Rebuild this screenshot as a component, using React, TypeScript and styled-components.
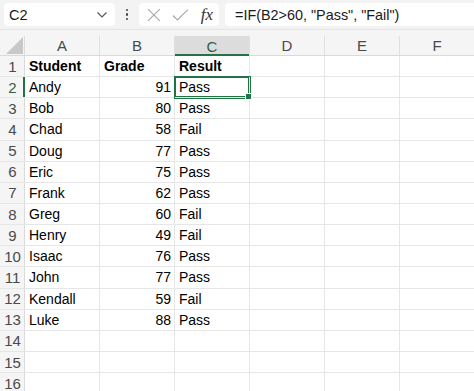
import React from "react";
import styled, { createGlobalStyle } from "styled-components";

const GlobalStyle = createGlobalStyle`
  html, body {
    margin: 0;
    padding: 0;
    background: #ffffff;
    overflow: hidden;
  }
  body {
    font-family: "Liberation Sans", Arial, sans-serif;
  }
`;

const GREEN = "#217346";
const COLS = ["A", "B", "C", "D", "E", "F"];
const SELECTED_COL = 2;
const SELECTED_ROW = 2;

type Row = [string, string, string];

const rows: Row[] = [
  ["Student", "Grade", "Result"],
  ["Andy", "91", "Pass"],
  ["Bob", "80", "Pass"],
  ["Chad", "58", "Fail"],
  ["Doug", "77", "Pass"],
  ["Eric", "75", "Pass"],
  ["Frank", "62", "Pass"],
  ["Greg", "60", "Fail"],
  ["Henry", "49", "Fail"],
  ["Isaac", "76", "Pass"],
  ["John", "77", "Pass"],
  ["Kendall", "59", "Fail"],
  ["Luke", "88", "Pass"],
  ["", "", ""],
  ["", "", ""],
  ["", "", ""],
];

export default function App() {
  return (
    <>
      <GlobalStyle />
      <Window>
        <FormulaBar>
          <NameBox>
            <NameText>C2</NameText>
            <svg width="12" height="8" viewBox="0 0 12 8">
              <path d="M1.5 1.5 L6 6 L10.5 1.5" fill="none" stroke="#555" strokeWidth="1.2" />
            </svg>
          </NameBox>
          <Dots>
            <Dot />
            <Dot />
            <Dot />
          </Dots>
          <ActionBox>
            <svg width="16" height="16" viewBox="0 0 16 16">
              <path d="M2 2 L14 14 M14 2 L2 14" stroke="#a8a8a8" strokeWidth="1.1" />
            </svg>
            <svg width="17" height="14" viewBox="0 0 17 14">
              <path d="M1 7.5 L5.5 12 L16 1.5" fill="none" stroke="#a8a8a8" strokeWidth="1.1" />
            </svg>
            <Fx>fx</Fx>
          </ActionBox>
          <FormulaBox>=IF(B2&gt;60, "Pass", "Fail")</FormulaBox>
        </FormulaBar>
        <Sheet>
          <HeaderRow>
            <Corner>
              <svg width="17" height="17" viewBox="0 0 17 17">
                <path d="M17 0 L17 17 L0 17 Z" fill="#c8c8c8" />
              </svg>
            </Corner>
            {COLS.map((c, i) => (
              <ColHeader key={c} $active={i === SELECTED_COL}>
                {c}
              </ColHeader>
            ))}
          </HeaderRow>
          {rows.map((r, idx) => {
            const n = idx + 1;
            const bold = n === 1;
            return (
              <GridRow key={n}>
                <RowHeader $active={n === SELECTED_ROW}>{n}</RowHeader>
                <Cell $bold={bold}>{r[0]}</Cell>
                <Cell $bold={bold} $right={!bold}>
                  {r[1]}
                </Cell>
                <Cell $bold={bold} $selected={n === SELECTED_ROW}>
                  {r[2]}
                  {n === SELECTED_ROW && <FillHandle />}
                </Cell>
                <Cell />
                <Cell />
                <Cell />
              </GridRow>
            );
          })}
        </Sheet>
      </Window>
    </>
  );
}

const Window = styled.div`
  width: 474px;
  height: 391px;
  overflow: hidden;
  background: #ffffff;
`;

const FormulaBar = styled.div`
  display: flex;
  align-items: center;
  gap: 6px;
  height: 30px;
  padding: 0 0 0 4px;
  background: #f3f3f3;
  border-bottom: 1px solid #e4e4e4;
  box-sizing: border-box;
`;

const NameBox = styled.div`
  display: flex;
  align-items: center;
  justify-content: space-between;
  width: 111px;
  height: 23px;
  padding: 0 7px 0 5px;
  box-sizing: border-box;
  background: #ffffff;
  border-radius: 4px;
`;

const NameText = styled.span`
  font-size: 14.5px;
  color: #1a1a1a;
`;

const Dots = styled.div`
  display: flex;
  flex-direction: column;
  gap: 2px;
  width: 12px;
  align-items: center;
`;

const Dot = styled.span`
  width: 2.5px;
  height: 2.5px;
  border-radius: 50%;
  background: #444;
`;

const ActionBox = styled.div`
  display: flex;
  align-items: center;
  gap: 10px;
  width: 80px;
  height: 23px;
  padding: 0 6px 0 7px;
  box-sizing: border-box;
  background: #ffffff;
  border-radius: 4px;
`;

const Fx = styled.span`
  font-family: "Liberation Serif", "Times New Roman", serif;
  font-style: italic;
  font-size: 17px;
  color: #333;
  margin-left: 2px;
`;

const FormulaBox = styled.div`
  flex: 1;
  display: flex;
  align-items: center;
  height: 23px;
  padding-left: 10px;
  background: #ffffff;
  border-radius: 4px 0 0 4px;
  font-size: 14.4px;
  color: #1a1a1a;
  white-space: nowrap;
`;

const Sheet = styled.div`
  display: flex;
  flex-direction: column;
  background: #ffffff;
`;

const HeaderRow = styled.div`
  display: grid;
  grid-template-columns: 25px repeat(6, 75px);
  height: 26px;
  padding-top: 6px;
  box-sizing: border-box;
  background: #f5f5f5;
  border-bottom: 1px solid #dadada;
`;

const Corner = styled.div`
  display: flex;
  align-items: flex-end;
  justify-content: flex-end;
  padding: 0 1px 1px 0;
  border-right: 1px solid #dcdcdc;
  box-sizing: border-box;
`;

const ColHeader = styled.div<{ $active?: boolean }>`
  display: flex;
  align-items: center;
  justify-content: center;
  font-size: 15px;
  color: ${(p) => (p.$active ? "#2f5f45" : "#4a4a4a")};
  background: ${(p) => (p.$active ? "#dcdcdc" : "transparent")};
  border-right: 1px solid #e0e0e0;
  box-shadow: ${(p) => (p.$active ? `inset 0 -2px 0 ${GREEN}` : "none")};
  margin-bottom: ${(p) => (p.$active ? "-1px" : "0")};
`;

const GridRow = styled.div`
  display: grid;
  grid-template-columns: 25px repeat(6, 75px);
  height: 21.15px;
`;

const RowHeader = styled.div<{ $active?: boolean }>`
  display: flex;
  align-items: center;
  justify-content: center;
  font-size: 15px;
  color: ${(p) => (p.$active ? "#2f5f45" : "#4a4a4a")};
  background: #f5f5f5;
  border-bottom: 1px solid #e6e6e6;
  box-shadow: inset ${(p) => (p.$active ? `-2px 0 0 ${GREEN}` : "-1px 0 0 #dadada")};
  box-sizing: border-box;
`;

const Cell = styled.div<{ $bold?: boolean; $right?: boolean; $selected?: boolean }>`
  position: relative;
  display: flex;
  align-items: center;
  justify-content: ${(p) => (p.$right ? "flex-end" : "flex-start")};
  padding: 0 3px 0 4px;
  box-sizing: border-box;
  font-size: 14px;
  font-weight: ${(p) => (p.$bold ? 700 : 400)};
  color: #000;
  border-right: 1px solid #e6e6e6;
  border-bottom: 1px solid #e6e6e6;
  white-space: nowrap;
  box-shadow: ${(p) => (p.$selected ? `0 0 0 1px ${GREEN}, inset 0 0 0 1px ${GREEN}` : "none")};
  z-index: ${(p) => (p.$selected ? 1 : 0)};
`;

const FillHandle = styled.span`
  position: absolute;
  right: -3px;
  bottom: -3px;
  width: 5px;
  height: 5px;
  background: ${GREEN};
  border: 1px solid #ffffff;
`;
